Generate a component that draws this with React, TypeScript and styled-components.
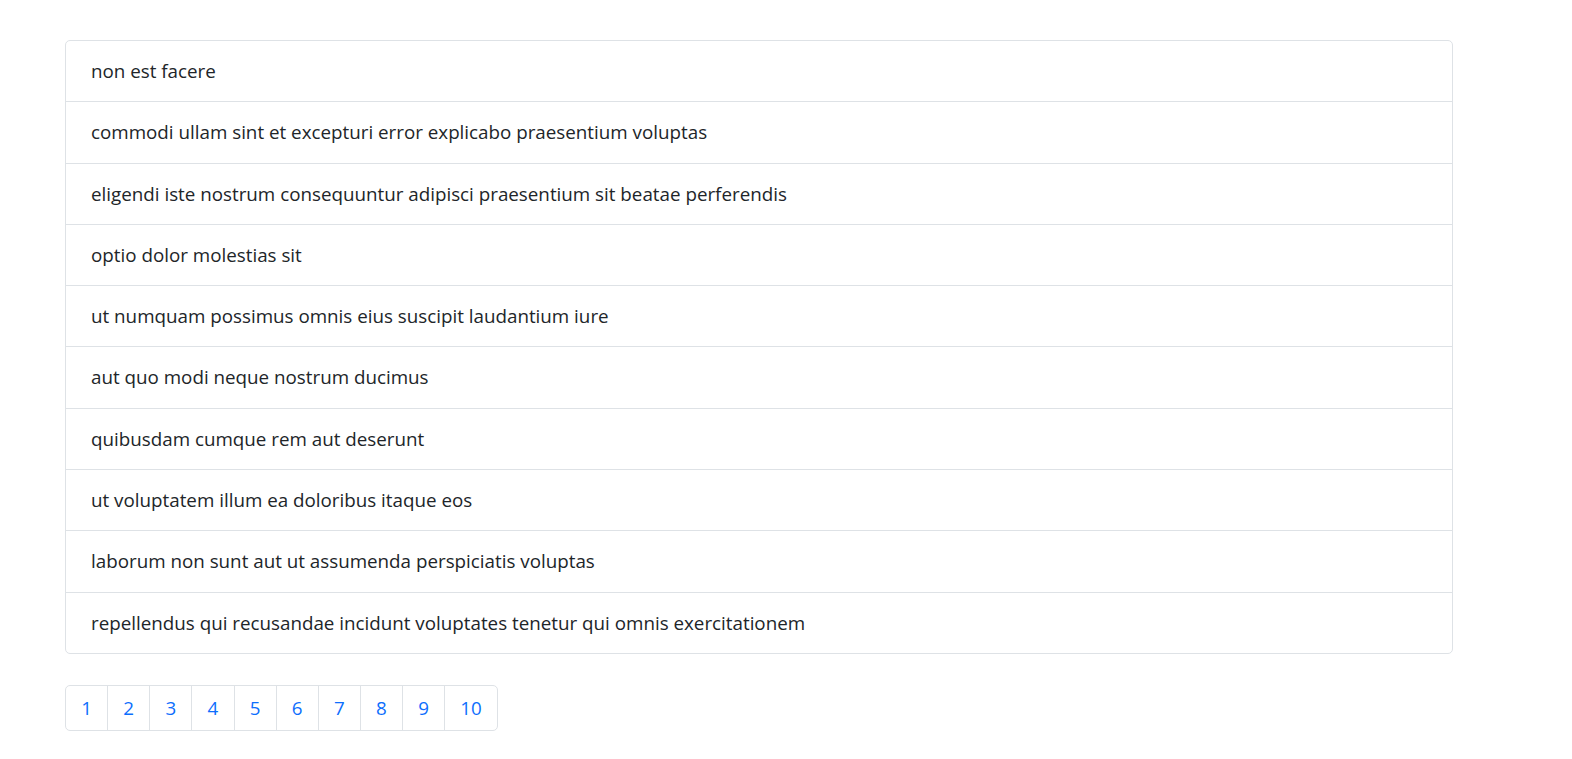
import React from "react";
import styled, { createGlobalStyle } from "styled-components";

const Global = createGlobalStyle`
  html, body { margin: 0; padding: 0; background: #fff; }
  body {
    font-family: "Open Sans", "Noto Sans", sans-serif;
    color: #212529;
  }
`;

const Page = styled.div`
  padding: 40px 119px 30px 65px;
  width: 1388px;
  box-sizing: content-box;
`;

const ListGroup = styled.ul`
  list-style: none;
  margin: 0;
  padding: 0;
  border: 1px solid #dee2e6;
  border-radius: 5px;
  display: flex;
  flex-direction: column;
`;

const ListItem = styled.li`
  padding: 16px 25px 16px 25px;
  font-size: 18.8px;
  line-height: 28.3px;
  color: #212529;
  & + & { border-top: 1px solid #dee2e6; }
`;

const Pagination = styled.nav`
  margin-top: 31px;
  display: inline-flex;
  border: 1px solid #dee2e6;
  border-radius: 5px;
  overflow: hidden;
`;

const PageLink = styled.a`
  display: block;
  padding: 8px 15.2px 8px;
  box-sizing: border-box;
  text-align: center;
  font-size: 18.8px;
  line-height: 28px;
  color: #0d6efd;
  text-decoration: none;
  & + & { border-left: 1px solid #dee2e6; }
`;

const items = [
  "non est facere",
  "commodi ullam sint et excepturi error explicabo praesentium voluptas",
  "eligendi iste nostrum consequuntur adipisci praesentium sit beatae perferendis",
  "optio dolor molestias sit",
  "ut numquam possimus omnis eius suscipit laudantium iure",
  "aut quo modi neque nostrum ducimus",
  "quibusdam cumque rem aut deserunt",
  "ut voluptatem illum ea doloribus itaque eos",
  "laborum non sunt aut ut assumenda perspiciatis voluptas",
  "repellendus qui recusandae incidunt voluptates tenetur qui omnis exercitationem",
];

export default function App() {
  return (
    <>
      <Global />
      <Page>
        <ListGroup>
          {items.map((t) => (
            <ListItem key={t}>{t}</ListItem>
          ))}
        </ListGroup>
        <Pagination>
          {Array.from({ length: 10 }, (_, i) => (
            <PageLink key={i} href="#">{i + 1}</PageLink>
          ))}
        </Pagination>
      </Page>
    </>
  );
}
